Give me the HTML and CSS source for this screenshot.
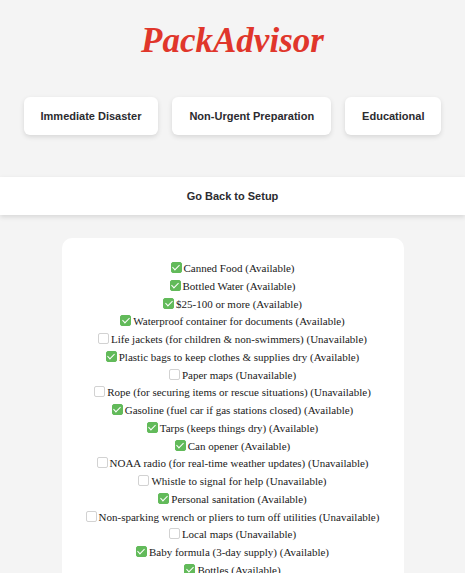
FILE: index.html
```html
<!DOCTYPE html>
<html>
<head>
<meta charset="utf-8">
<link rel="stylesheet" href="styles.css">
</head>
<body>
<h1 class="title">PackAdvisor</h1>
<div class="modes">
  <button class="mode">Immediate Disaster</button>
  <button class="mode">Non-Urgent Preparation</button>
  <button class="mode">Educational</button>
</div>
<button class="back">Go Back to Setup</button>
<div class="card">
  <div class="item"><input type="checkbox" checked>Canned Food (Available)</div>
  <div class="item"><input type="checkbox" checked>Bottled Water (Available)</div>
  <div class="item"><input type="checkbox" checked>$25-100 or more (Available)</div>
  <div class="item"><input type="checkbox" checked>Waterproof container for documents (Available)</div>
  <div class="item"><input type="checkbox">Life jackets (for children &amp; non-swimmers) (Unavailable)</div>
  <div class="item"><input type="checkbox" checked>Plastic bags to keep clothes &amp; supplies dry (Available)</div>
  <div class="item"><input type="checkbox">Paper maps (Unavailable)</div>
  <div class="item"><input type="checkbox">Rope (for securing items or rescue situations) (Unavailable)</div>
  <div class="item"><input type="checkbox" checked>Gasoline (fuel car if gas stations closed) (Available)</div>
  <div class="item"><input type="checkbox" checked>Tarps (keeps things dry) (Available)</div>
  <div class="item"><input type="checkbox" checked>Can opener (Available)</div>
  <div class="item"><input type="checkbox">NOAA radio (for real-time weather updates) (Unavailable)</div>
  <div class="item"><input type="checkbox">Whistle to signal for help (Unavailable)</div>
  <div class="item"><input type="checkbox" checked>Personal sanitation (Available)</div>
  <div class="item"><input type="checkbox">Non-sparking wrench or pliers to turn off utilities (Unavailable)</div>
  <div class="item"><input type="checkbox">Local maps (Unavailable)</div>
  <div class="item"><input type="checkbox" checked>Baby formula (3-day supply) (Available)</div>
  <div class="item"><input type="checkbox" checked>Bottles (Available)</div>
  <div class="item"><input type="checkbox" checked>Diapers (Available)</div>
</div>
</body>
</html>
```

FILE: styles.css
```css
html, body {
  margin: 0;
  padding: 0;
  background: #f4f4f4;
}
body {
  font-family: "Liberation Serif", serif;
}
.title {
  margin: 21px 0 0;
  text-align: center;
  font-family: "Liberation Serif", serif;
  font-style: italic;
  font-weight: bold;
  font-size: 35px;
  line-height: 40px;
  color: #e0362b;
}
.modes {
  display: flex;
  justify-content: center;
  gap: 14px;
  margin-top: 36px;
}
.mode {
  height: 38px;
  padding: 0 17px;
  border: none;
  border-radius: 6px;
  background: #fff;
  box-shadow: 0 2px 5px rgba(0,0,0,0.12);
  font-family: "Liberation Sans", Arial, sans-serif;
  font-weight: bold;
  font-size: 11px;
  color: #2b2b2f;
}
.back {
  display: block;
  width: 100%;
  height: 38px;
  margin-top: 42px;
  border: none;
  background: #fff;
  box-shadow: 0 2px 5px rgba(0,0,0,0.12);
  font-family: "Liberation Sans", Arial, sans-serif;
  font-weight: bold;
  font-size: 11px;
  color: #2b2b2f;
}
.card {
  width: 342px;
  box-sizing: border-box;
  margin: 23px auto 0;
  padding: 22px 10px 20px;
  background: #fff;
  border-radius: 10px;
  text-align: center;
}
.item {
  font-size: 11px;
  line-height: 17.75px;
  color: #1a1a1a;
}
.item input {
  -webkit-appearance: none;
  appearance: none;
  position: relative;
  box-sizing: border-box;
  width: 11px;
  height: 11px;
  margin: 0 2px 0 0;
  vertical-align: -1px;
  border: 1px solid #d2d2d2;
  border-radius: 2px;
  background: #fff;
}
.item input:checked {
  background: #62ba5a;
  border-color: #62ba5a;
}
.item input:checked::after {
  content: "";
  position: absolute;
  left: 2.5px;
  top: 0px;
  width: 3px;
  height: 6px;
  border: solid #fff;
  border-width: 0 1.6px 1.6px 0;
  transform: rotate(45deg);
}
```
